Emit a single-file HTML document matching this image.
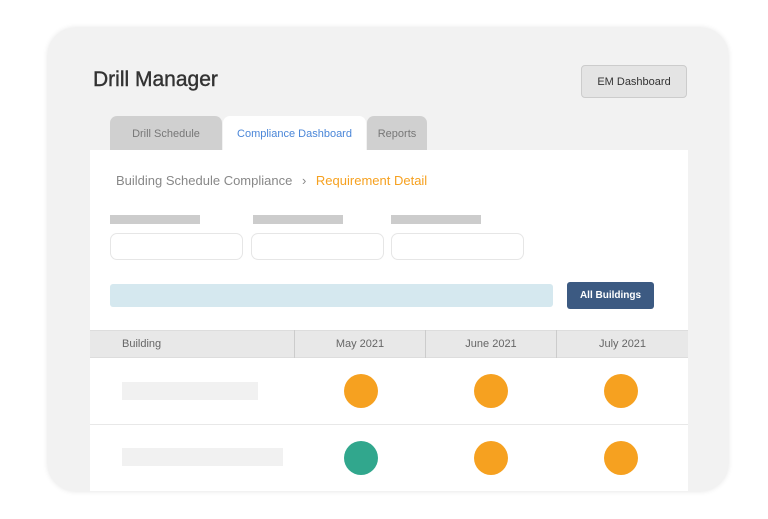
<!DOCTYPE html>
<html><head><style>
*{margin:0;padding:0;box-sizing:border-box}
body{width:768px;height:519px;background:#fff;font-family:"Liberation Sans",sans-serif;position:relative;overflow:hidden}
.a{position:absolute}
.card{left:48px;top:28px;width:680px;height:463px;background:#f2f2f2;border-radius:28px;box-shadow:0 0 6px rgba(0,0,0,.12);overflow:hidden}
.tab{top:116px;height:35px;border-radius:7px 7px 0 0;font-size:11px;color:#777;display:flex;align-items:center;justify-content:center;background:#d0d0d0}
.circ{width:34px;height:34px;border-radius:50%;background:#f6a120}
.th{top:330px;height:28px;font-size:11px;color:#666;display:flex;align-items:center;justify-content:center;border-right:1px solid #ccc}
</style></head><body>
<div class="a card"></div>
<div class="a" style="left:93px;top:68px;font-size:21px;color:#333;-webkit-text-stroke:.4px #333">Drill Manager</div>
<div class="a" style="left:581px;top:65px;width:106px;height:33px;background:#e4e4e4;border:1px solid #ccc;border-radius:4px;font-size:11px;color:#333;display:flex;align-items:center;justify-content:center">EM Dashboard</div>
<div class="a tab" style="left:110px;width:112px">Drill Schedule</div>
<div class="a tab" style="left:223px;width:143px;background:#fff;color:#4a86d8">Compliance Dashboard</div>
<div class="a tab" style="left:367px;width:60px">Reports</div>
<div class="a" style="left:90px;top:150px;width:598px;height:341px;background:#fff"></div>
<div class="a" style="left:116px;top:173px;font-size:13px;color:#888">Building Schedule Compliance <span style="margin:0 6px">›</span> <span style="color:#f6a120">Requirement Detail</span></div>
<div class="a" style="left:110px;top:215px;width:90px;height:9px;background:#ccc"></div>
<div class="a" style="left:253px;top:215px;width:90px;height:9px;background:#ccc"></div>
<div class="a" style="left:391px;top:215px;width:90px;height:9px;background:#ccc"></div>
<div class="a" style="left:110px;top:233px;width:133px;height:27px;border:1px solid #e6e6e6;border-radius:7px"></div>
<div class="a" style="left:251px;top:233px;width:133px;height:27px;border:1px solid #e6e6e6;border-radius:7px"></div>
<div class="a" style="left:391px;top:233px;width:133px;height:27px;border:1px solid #e6e6e6;border-radius:7px"></div>
<div class="a" style="left:110px;top:284px;width:443px;height:23px;background:#d5e8ef;border-radius:3px"></div>
<div class="a" style="left:567px;top:282px;width:87px;height:27px;background:#3c5a82;border-radius:3px;color:#fff;font-size:10px;font-weight:bold;display:flex;align-items:center;justify-content:center">All Buildings</div>
<div class="a" style="left:90px;top:330px;width:598px;height:28px;background:#e8e8e8;border-top:1px solid #ddd;border-bottom:1px solid #ddd"></div>
<div class="th a" style="left:90px;width:205px;justify-content:flex-start;padding-left:32px">Building</div>
<div class="th a" style="left:295px;width:131px">May 2021</div>
<div class="th a" style="left:426px;width:131px">June 2021</div>
<div class="th a" style="left:557px;width:131px;border-right:none">July 2021</div>
<div class="a" style="left:90px;top:424px;width:598px;height:1px;background:#e8e8e8"></div>
<div class="a" style="left:122px;top:382px;width:136px;height:18px;background:#f1f1f1"></div>
<div class="a" style="left:122px;top:448px;width:161px;height:18px;background:#f1f1f1"></div>
<div class="a circ" style="left:344px;top:374px"></div>
<div class="a circ" style="left:474px;top:374px"></div>
<div class="a circ" style="left:604px;top:374px"></div>
<div class="a circ" style="left:344px;top:441px;background:#31a78d"></div>
<div class="a circ" style="left:474px;top:441px"></div>
<div class="a circ" style="left:604px;top:441px"></div>
</body></html>
